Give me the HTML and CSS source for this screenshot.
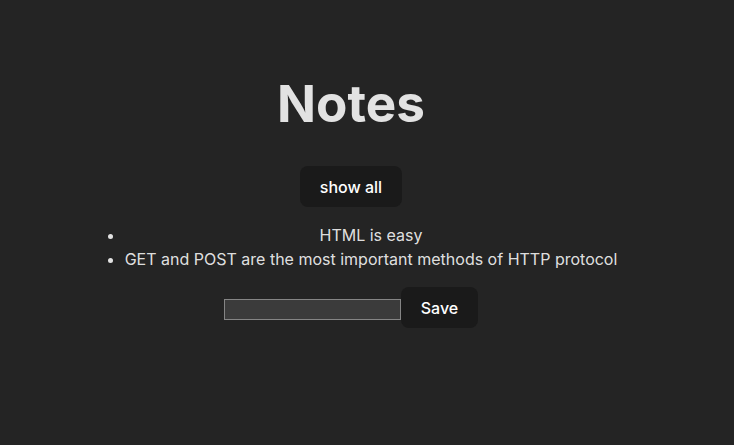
FILE: index.html
```html
<!DOCTYPE html>
<html lang="en">
<head>
<meta charset="utf-8">
<title>Notes</title>
<link rel="stylesheet" href="styles.css">
</head>
<body>
<div class="app">
  <h1 class="title">Notes</h1>
  <div class="toolbar"><button class="btn">show all</button></div>
  <ul class="notes">
    <li>HTML is easy</li>
    <li>GET and POST are the most important methods of HTTP protocol</li>
  </ul>
  <form class="note-form"><input class="note-input" type="text"><button class="btn" type="button">Save</button></form>
</div>
</body>
</html>
```
FILE: styles.css
```css
:root {
  font-family: Inter, system-ui, Helvetica, Arial, sans-serif;
  line-height: 1.5;
  font-weight: 400;
  color-scheme: dark;
  color: rgba(255, 255, 255, 0.87);
  background-color: #242424;
}

body {
  margin: 0;
  display: flex;
  justify-content: center;
  padding-right: 32px;
  min-height: 100vh;
}

.app {
  padding: 41px 32px 32px;
  text-align: center;
}

.title {
  font-size: 3.2em;
  line-height: 1.1;
  font-weight: 700;
  margin: 0.67em 0;
}

.btn {
  border-radius: 8px;
  border: 1px solid transparent;
  padding: 0.6em 1.2em;
  font-size: 1em;
  font-weight: 500;
  font-family: inherit;
  background-color: #1a1a1a;
  color: #ffffff;
  cursor: pointer;
}

.notes {
  margin: 16px 0;
  padding-left: 40px;
}

.note-form {
  margin: 0;
}

.note-input {
  width: 177px;
  height: 21px;
  box-sizing: border-box;
  background: #3b3b3b;
  border: 1px solid #858585;
  border-radius: 0;
  color: #fff;
  font-size: 13.33px;
  padding: 1px 2px;
  vertical-align: baseline;
}
```
